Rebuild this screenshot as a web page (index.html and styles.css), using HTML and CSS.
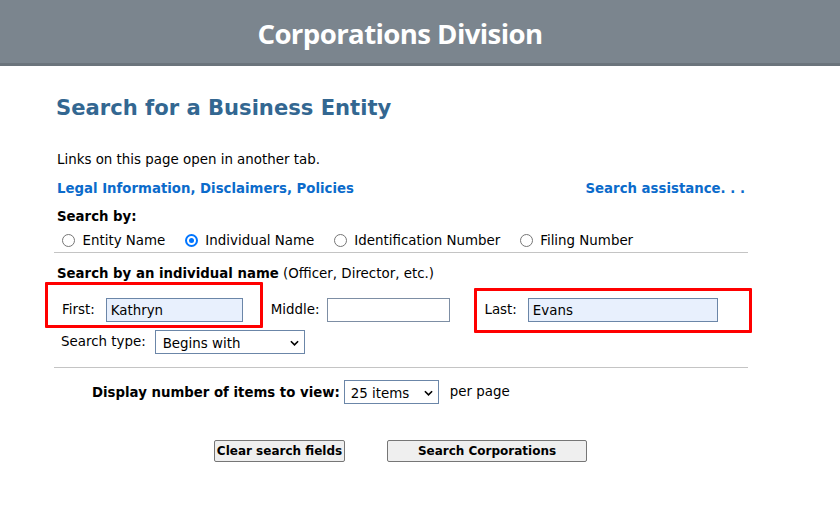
FILE: index.html
```html
<!DOCTYPE html>
<html>
<head>
<meta charset="utf-8">
<link rel="stylesheet" href="styles.css">
</head>
<body>
<header class="banner"><h1>Corporations Division</h1></header>
<main class="content">
  <h2 class="title">Search for a Business Entity</h2>
  <p class="note">Links on this page open in another tab.</p>
  <div class="links">
    <a href="#">Legal Information, Disclaimers, Policies</a>
    <a href="#">Search assistance. . .</a>
  </div>
  <div class="searchby">Search by:</div>
  <div class="radios">
    <label class="radio"><span class="dot"></span>Entity Name</label>
    <label class="radio"><span class="dot on"></span>Individual Name</label>
    <label class="radio"><span class="dot"></span>Identification Number</label>
    <label class="radio"><span class="dot"></span>Filing Number</label>
  </div>
  <div class="rule"></div>
  <div class="indiv"><b>Search by an individual name</b> (Officer, Director, etc.)</div>
  <div class="names">
    <span class="lbl first-lbl">First:</span>
    <span class="field f-first">Kathryn</span>
    <span class="lbl mid-lbl">Middle:</span>
    <span class="field empty f-mid"></span>
    <span class="lbl last-lbl">Last:</span>
    <span class="field f-last">Evans</span>
    <span class="mark mark-first"></span>
    <span class="mark mark-last"></span>
  </div>
  <div class="stype">
    <span class="lbl">Search type:</span>
    <span class="select s-type">Begins with<svg viewBox="0 0 10 6" class="chev"><path d="M1 1 L5 5 L9 1" fill="none" stroke="#000" stroke-width="1.8"/></svg></span>
  </div>
  <div class="rule rule2"></div>
  <div class="display">
    <b>Display number of items to view:</b>
    <span class="select s-items">25 items<svg viewBox="0 0 10 6" class="chev"><path d="M1 1 L5 5 L9 1" fill="none" stroke="#000" stroke-width="1.8"/></svg></span>
    <span class="perpage">per page</span>
  </div>
  <div class="buttons">
    <span class="btn b-clear">Clear search fields</span>
    <span class="btn b-search">Search Corporations</span>
  </div>
</main>
</body>
</html>
```
FILE: styles.css
```css
html, body { margin: 0; padding: 0; background: #fff; }
body { font-family: "DejaVu Sans", Verdana, sans-serif; font-size: 13.4px; color: #000; }
b { font-size: 13.3px; }
.banner {
  height: 63px; background: #7b858e; border-bottom: 3px solid #6b747c;
  display: flex; align-items: center; justify-content: center; padding-right: 40px;
}
.banner h1 {
  margin: 0; color: #fff; font-family: "Open Sans", sans-serif; font-weight: 700;
  font-size: 27.6px; letter-spacing: -0.6px; position: relative; top: 1px;
}
.content { width: 694px; margin-left: 54px; position: relative; }
.title {
  margin: 28px 0 0 2px; font-size: 21.1px; font-weight: 700; color: #336791; line-height: 28px;
}
.note { margin: 30px 0 0 3px; line-height: 16px; }
.links { display: flex; justify-content: space-between; margin: 13px 3px 0 3px; line-height: 16px; }
.links a { color: #0b6bcb; font-weight: 700; text-decoration: none; font-size: 13.3px; }
.searchby { font-weight: 700; margin: 12px 0 0 3px; line-height: 16px; font-size: 13.3px; }
.radios { display: flex; margin: 8px 0 0 8px; line-height: 16px; }
.radio { display: flex; align-items: center; margin-right: 19.5px; }
.dot {
  width: 13px; height: 13px; border: 1px solid #767676; border-radius: 50%;
  margin-right: 7.5px; box-sizing: border-box; position: relative; top: -1px;
}
.dot.on { border: 2px solid #0075ff; }
.dot.on::after { content: ""; position: absolute; left: 2px; top: 2px; width: 5px; height: 5px; border-radius: 50%; background: #0075ff; }
.rule { height: 1px; background: #c4c4c4; margin-top: 3px; }
.indiv { margin: 13px 0 0 3px; line-height: 16px; }
.names { position: relative; display: flex; align-items: center; height: 26px; margin-top: 15px; }
.lbl { line-height: 16px; }
.first-lbl { margin-left: 8px; }
.field {
  box-sizing: border-box; height: 24px; border: 1px solid #6b86a8; background: #e8f0fd;
  display: flex; align-items: center; padding-left: 4px; margin-left: 11px;
}
.field.empty { background: #fff; border-color: #7d8ea4; }
.f-first { width: 137px; }
.mid-lbl { margin-left: 28px; }
.f-mid { width: 123px; margin-left: 8px; }
.last-lbl { margin-left: 34px; }
.f-last { width: 190px; margin-left: 11px; }
.mark { position: absolute; border: 3px solid #f00; box-sizing: border-box; border-radius: 1px; }
.mark-first { left: -9px; top: -15px; width: 218px; height: 46px; }
.mark-last { left: 420px; top: -9px; width: 278px; height: 45px; }
.stype { display: flex; align-items: center; margin: 7px 0 0 7px; }
.select {
  box-sizing: border-box; height: 24px; border: 1px solid #6b86a8; background: #fff;
  display: flex; align-items: center; justify-content: space-between; padding: 2px 5px 0 7px;
}
.s-type { width: 150px; margin-left: 9px; }
.chev { width: 9px; height: 6px; }
.rule2 { margin-top: 13px; }
.display { display: flex; align-items: center; margin: 12px 0 0 38px; }
.s-items { width: 95px; margin-left: 4px; padding-left: 6px; }
.perpage { margin-left: 11px; position: relative; top: -1px; }
.buttons { display: flex; margin: 36px 0 0 160px; }
.btn {
  box-sizing: border-box; height: 22px; border: 1px solid #767676; border-radius: 2px;
  background: #efefef; font-weight: 700; display: flex; align-items: center; justify-content: center;
  white-space: nowrap; padding: 0; font-size: 12px;
}
.b-clear { width: 131px; }
.b-search { width: 200px; margin-left: 42px; }
```
